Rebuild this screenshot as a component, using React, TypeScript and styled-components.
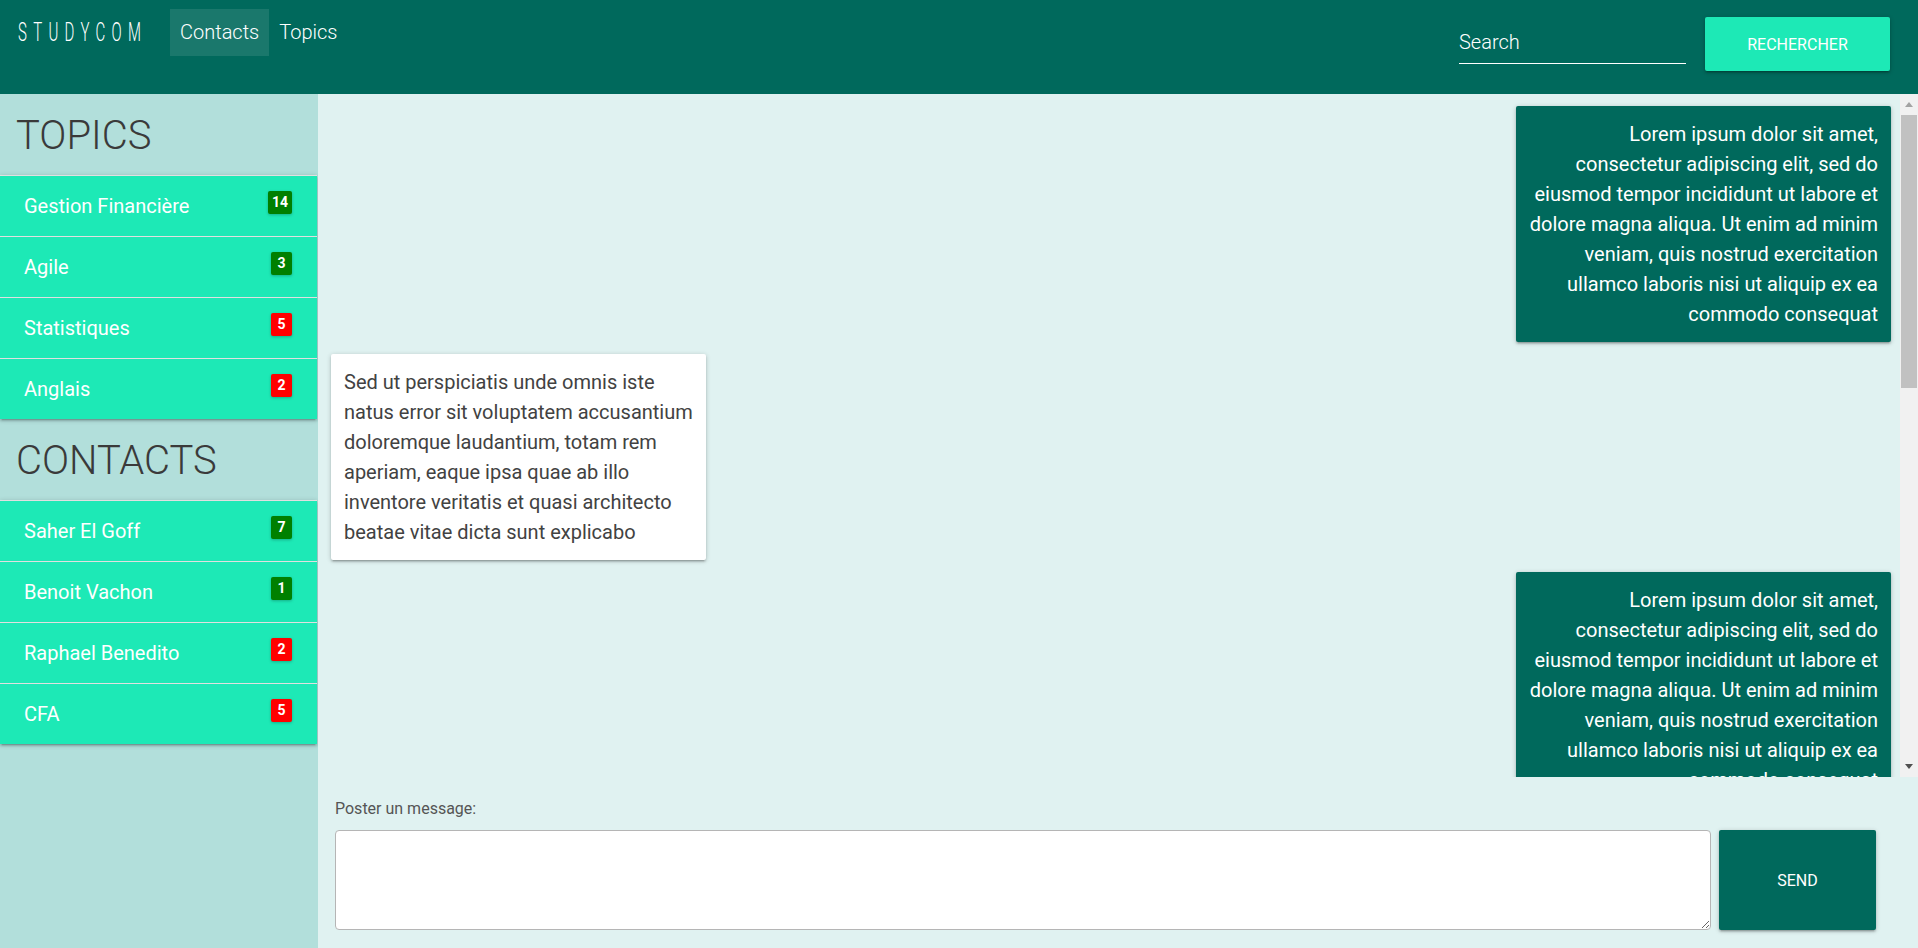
import React, { FunctionComponent } from 'react'
import styled, { createGlobalStyle } from 'styled-components'

const GlobalStyle = createGlobalStyle`
  html, body {
    margin: 0;
    padding: 0;
    height: 100%;
    overflow: hidden;
  }
  body {
    font-family: Roboto, 'Liberation Sans', sans-serif;
    color: #424242;
  }
  * { box-sizing: border-box; }
`

const Page = styled.div`
  display: flex;
  flex-direction: column;
  width: 1918px;
  height: 948px;
`

const Header = styled.header`
  flex: 0 0 94px;
  display: flex;
  justify-content: space-between;
  align-items: flex-start;
  background: #00695c;
  padding: 0 28px 0 18px;
`

const NavLeft = styled.div`
  display: flex;
  align-items: center;
  padding-top: 9px;
`

const Logo = styled.div`
  width: 142px;
  font-size: 25px;
  font-weight: 300;
  color: #fff;
  letter-spacing: 10.5px;
  white-space: nowrap;
  transform: scaleX(0.6);
  transform-origin: left center;
  margin-right: 10px;
`

const NavLink = styled.a<{ $active?: boolean }>`
  display: block;
  height: 47px;
  line-height: 47px;
  padding: 0 10px;
  font-size: 20px;
  font-weight: 300;
  color: #fff;
  text-decoration: none;
  background: ${p => (p.$active ? 'rgba(255,255,255,0.1)' : 'transparent')};
`

const NavRight = styled.div`
  display: flex;
  align-items: center;
  gap: 19px;
  padding-top: 17px;
`

const SearchInput = styled.input`
  width: 227px;
  height: 40px;
  border: none;
  border-bottom: 1px solid #fff;
  background: transparent;
  color: #fff;
  font-family: Roboto, sans-serif;
  font-size: 20px;
  font-weight: 300;
  padding: 0 0 4px;
  outline: none;
  &::placeholder { color: #fff; opacity: 1; }
`

const Button = styled.button<{ $bg: string; $w: number; $h: number }>`
  width: ${p => p.$w}px;
  height: ${p => p.$h}px;
  border: none;
  border-radius: 2px;
  background: ${p => p.$bg};
  color: #fff;
  font-family: Roboto, sans-serif;
  font-size: 16px;
  text-transform: uppercase;
  box-shadow: 0 2px 2px 0 rgba(0,0,0,0.14), 0 3px 1px -2px rgba(0,0,0,0.12), 0 1px 5px 0 rgba(0,0,0,0.2);
  flex: 0 0 auto;
`

const Body = styled.div`
  flex: 1;
  display: flex;
  min-height: 0;
`

const Sidebar = styled.aside`
  flex: 0 0 318px;
  background: #b2dfdb;
`

const SectionTitle = styled.h4`
  margin: 0;
  height: 81px;
  display: flex;
  align-items: center;
  padding: 2px 0 0 16px;
  font-size: 40px;
  font-weight: 300;
  color: #3a3a3a;
`

const Collection = styled.ul`
  list-style: none;
  margin: 0;
  padding: 0;
  width: 317px;
  box-shadow: 0 2px 2px 0 rgba(0,0,0,0.14), 0 3px 1px -2px rgba(0,0,0,0.12), 0 1px 5px 0 rgba(0,0,0,0.2);
  border-top: 1px solid #e0e0e0;
`

const CollectionItem = styled.li`
  display: flex;
  justify-content: space-between;
  align-items: center;
  height: 61px;
  padding: 0 25px 0 24px;
  background: #1de9b6;
  border-bottom: 1px solid #e0e0e0;
  font-size: 20px;
  color: #fff;
  &:last-child { border-bottom: none; height: 60px; }
`

const Badge = styled.span<{ $hot?: boolean }>`
  min-width: 21px;
  height: 23px;
  line-height: 23px;
  padding: 0 4px;
  border-radius: 2px;
  text-align: center;
  font-size: 14px;
  font-weight: 700;
  color: #fff;
  background: ${p => (p.$hot ? '#ff0000' : '#008000')};
  box-shadow: 0 1px 3px rgba(0,0,0,0.25);
  margin-bottom: 7px;
`

const Main = styled.main`
  flex: 1;
  display: flex;
  flex-direction: column;
  background: #e0f2f1;
  min-width: 0;
`

const ThreadFrame = styled.div`
  flex: 0 0 683px;
  display: flex;
  min-height: 0;
`

const Thread = styled.div`
  flex: 1;
  overflow: hidden;
  padding: 12px 9px 12px 13px;
  display: flex;
  flex-direction: column;
  gap: 12px;
`

const ScrollTrack = styled.div`
  flex: 0 0 18px;
  display: flex;
  flex-direction: column;
  background: #f1f1f1;
`

const ScrollArrow = styled.div<{ $down?: boolean }>`
  flex: 0 0 21px;
  display: flex;
  align-items: center;
  justify-content: center;
  &::after {
    content: '';
    border-left: 4.5px solid transparent;
    border-right: 4.5px solid transparent;
    ${p => (p.$down ? 'border-top: 5px solid #505050;' : 'border-bottom: 5px solid #a3a3a3;')}
  }
`

const ScrollBody = styled.div`
  flex: 1;
  padding: 0 1px;
`

const ScrollThumb = styled.div`
  height: 273px;
  background: #c1c1c1;
`

const Bubble = styled.div<{ $mine?: boolean }>`
  flex: 0 0 auto;
  width: 375px;
  align-self: ${p => (p.$mine ? 'flex-end' : 'flex-start')};
  padding: 13px;
  border-radius: 2px;
  background: ${p => (p.$mine ? '#00695c' : '#fff')};
  color: ${p => (p.$mine ? '#fff' : '#424242')};
  text-align: ${p => (p.$mine ? 'right' : 'left')};
  font-size: 20px;
  line-height: 30px;
  box-shadow: 0 2px 2px 0 rgba(0,0,0,0.14), 0 3px 1px -2px rgba(0,0,0,0.12), 0 1px 5px 0 rgba(0,0,0,0.2);
`

const Composer = styled.div`
  flex: 1;
  padding: 22px 42px 0 17px;
`

const Label = styled.label`
  display: block;
  font-size: 16px;
  color: #555;
  height: 31px;
`

const ComposerRow = styled.div`
  display: flex;
  gap: 8px;
  align-items: flex-start;
`

const TextArea = styled.textarea`
  flex: 1;
  height: 100px;
  border: 1px solid #b5b5b5;
  border-radius: 4px;
  background: #fff;
  resize: vertical;
  font-family: Roboto, sans-serif;
  outline: none;
`

const topics = [
  { name: 'Gestion Financière', count: 14, hot: false },
  { name: 'Agile', count: 3, hot: false },
  { name: 'Statistiques', count: 5, hot: true },
  { name: 'Anglais', count: 2, hot: true },
]

const contacts = [
  { name: 'Saher El Goff', count: 7, hot: false },
  { name: 'Benoit Vachon', count: 1, hot: false },
  { name: 'Raphael Benedito', count: 2, hot: true },
  { name: 'CFA', count: 5, hot: true },
]

const lorem = 'Lorem ipsum dolor sit amet, consectetur adipiscing elit, sed do eiusmod tempor incididunt ut labore et dolore magna aliqua. Ut enim ad minim veniam, quis nostrud exercitation ullamco laboris nisi ut aliquip ex ea commodo consequat'
const sedUt = 'Sed ut perspiciatis unde omnis iste natus error sit voluptatem accusantium doloremque laudantium, totam rem aperiam, eaque ipsa quae ab illo inventore veritatis et quasi architecto beatae vitae dicta sunt explicabo'

const messages = [
  { mine: true, text: lorem },
  { mine: false, text: sedUt },
  { mine: true, text: lorem },
  { mine: false, text: sedUt },
  { mine: true, text: lorem },
  { mine: false, text: sedUt },
]

const App: FunctionComponent = () => {
  const renderList = (items: typeof topics) =>
    <Collection>
      { items.map(item =>
        <CollectionItem key={item.name}>
          <span>{ item.name }</span>
          <Badge $hot={item.hot}>{ item.count }</Badge>
        </CollectionItem>
      ) }
    </Collection>

  return (
    <Page>
      <GlobalStyle />
      <Header>
        <NavLeft>
          <Logo>STUDYCOM</Logo>
          <NavLink $active href='#'>Contacts</NavLink>
          <NavLink href='#'>Topics</NavLink>
        </NavLeft>
        <NavRight>
          <SearchInput placeholder='Search' />
          <Button $bg='#1de9b6' $w={185} $h={54}>Rechercher</Button>
        </NavRight>
      </Header>
      <Body>
        <Sidebar>
          <SectionTitle>TOPICS</SectionTitle>
          { renderList(topics) }
          <SectionTitle>CONTACTS</SectionTitle>
          { renderList(contacts) }
        </Sidebar>
        <Main>
          <ThreadFrame>
            <Thread>
              { messages.map((m, i) =>
                <Bubble key={i} $mine={m.mine}>{ m.text }</Bubble>
              ) }
            </Thread>
            <ScrollTrack>
              <ScrollArrow />
              <ScrollBody>
                <ScrollThumb />
              </ScrollBody>
              <ScrollArrow $down />
            </ScrollTrack>
          </ThreadFrame>
          <Composer>
            <Label>Poster un message:</Label>
            <ComposerRow>
              <TextArea />
              <Button $bg='#00695c' $w={157} $h={100}>Send</Button>
            </ComposerRow>
          </Composer>
        </Main>
      </Body>
    </Page>
  )
}

export default App
